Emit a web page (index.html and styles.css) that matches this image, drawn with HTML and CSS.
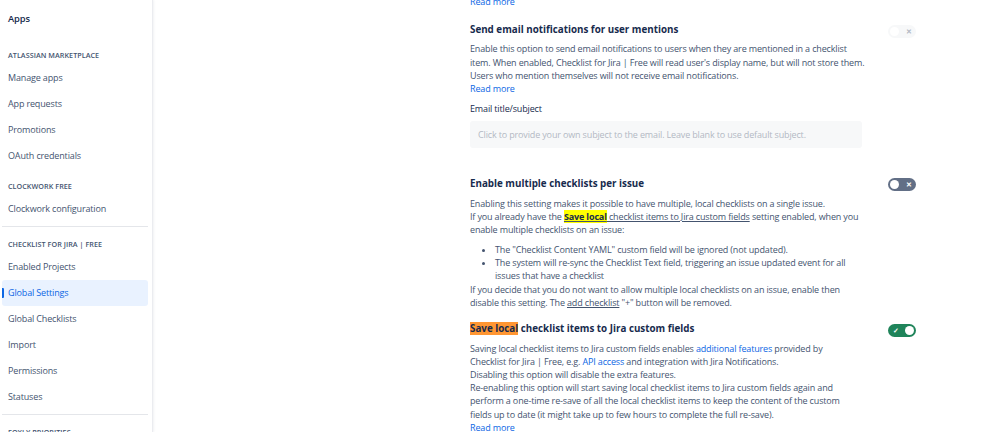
FILE: index.html
```html
<!DOCTYPE html>
<html lang="en">
<head>
<meta charset="utf-8">
<title>Global Settings</title>
<link rel="stylesheet" href="styles.css">
</head>
<body>
<div class="layout">
  <nav class="sidebar">
    <div class="nav-apps">Apps</div>
    <div class="nav-group">
      <div class="nav-head">ATLASSIAN MARKETPLACE</div>
      <div class="nav-item">Manage apps</div>
      <div class="nav-item">App requests</div>
      <div class="nav-item">Promotions</div>
      <div class="nav-item">OAuth credentials</div>
    </div>
    <div class="nav-group">
      <div class="nav-head">CLOCKWORK FREE</div>
      <div class="nav-item">Clockwork configuration</div>
    </div>
    <div class="nav-divider"></div>
    <div class="nav-group">
      <div class="nav-head">CHECKLIST FOR JIRA | FREE</div>
      <div class="nav-item">Enabled Projects</div>
      <div class="nav-item nav-item-active">Global Settings</div>
      <div class="nav-item">Global Checklists</div>
      <div class="nav-item">Import</div>
      <div class="nav-item">Permissions</div>
      <div class="nav-item">Statuses</div>
    </div>
    <div class="nav-divider"></div>
    <div class="nav-group">
      <div class="nav-head">FOXLY PRIORITIES</div>
    </div>
  </nav>

  <main class="main">
    <a class="link top-link">Read more</a>

    <section class="setting setting-first">
      <div class="setting-body">
        <h3 class="setting-title">Send email notifications for user mentions</h3>
        <p class="desc desc-fixed">Enable this option to send email notifications to users when they are mentioned in a checklist<br>item. When enabled, Checklist for Jira | Free will read user's display name, but will not store them.<br>Users who mention themselves will not receive email notifications.<br><a class="link">Read more</a></p>
        <div class="field-label">Email title/subject</div>
        <div class="field-input">Click to provide your own subject to the email. Leave blank to use default subject.</div>
      </div>
      <span class="toggle toggle-disabled"><span class="knob"></span><span class="mark">✕</span></span>
    </section>

    <section class="setting setting-second">
      <div class="setting-body">
        <h3 class="setting-title">Enable multiple checklists per issue</h3>
        <p class="desc">Enabling this setting makes it possible to have multiple, local checklists on a single issue.<br>If you already have the <u class="ref"><mark class="hl-yellow">Save local</mark> checklist items to Jira custom fields</u> setting enabled, when you enable multiple checklists on an issue:</p>
        <ul class="bullets">
          <li>The "Checklist Content YAML" custom field will be ignored (not updated).</li>
          <li>The system will re-sync the Checklist Text field, triggering an issue updated event for all issues that have a checklist</li>
        </ul>
        <p class="desc">If you decide that you do not want to allow multiple local checklists on an issue, enable then disable this setting. The <u>add checklist</u> "+" button will be removed.</p>
      </div>
      <span class="toggle toggle-off"><span class="knob"></span><span class="mark">✕</span></span>
    </section>

    <section class="setting setting-third">
      <div class="setting-body">
        <h3 class="setting-title"><mark class="hl-orange">Save local</mark> checklist items to Jira custom fields</h3>
        <p class="desc">Saving local checklist items to Jira custom fields enables <a class="link">additional features</a> provided by Checklist for Jira | Free, e.g. <a class="link">API access</a> and integration with Jira Notifications.<br>Disabling this option will disable the extra features.<br>Re-enabling this option will start saving local checklist items to Jira custom fields again and perform a one-time re-save of all the local checklist items to keep the content of the custom fields up to date (it might take up to few hours to complete the full re-save).<br><a class="link">Read more</a></p>
      </div>
      <span class="toggle toggle-on"><span class="mark">✓</span><span class="knob"></span></span>
    </section>
  </main>
</div>
</body>
</html>
```

FILE: styles.css
```css
* { box-sizing: border-box; }
html, body { margin: 0; padding: 0; }
body {
  font-family: "Open Sans", "Noto Sans", sans-serif;
  font-size: 9px;
  letter-spacing: -0.15px;
  color: #44546f;
  background: #fff;
  width: 999px;
  height: 432px;
  overflow: hidden;
}
.layout { display: flex; height: 432px; }

.sidebar {
  width: 153px;
  flex: none;
  border-right: 1px solid #ebecf0;
  box-shadow: 1px 0 2px rgba(9, 30, 66, 0.06);
  padding: 0 4px 0 2px;
}
.nav-apps {
  height: 42px;
  padding: 12px 0 0 6px;
  line-height: 14px;
  font-size: 9.4px;
  font-weight: 600;
  color: #172b4d;
}
.nav-group + .nav-group { margin-top: 4px; }
.nav-head {
  height: 23px;
  padding: 8px 0 0 6px;
  line-height: 10px;
  font-size: 7.2px;
  font-weight: 600;
  color: #44546f;
  letter-spacing: 0.05px;
}
.nav-item {
  height: 26px;
  line-height: 26px;
  padding-left: 6px;
  color: #44546f;
  border-radius: 3px;
  position: relative;
}
.nav-item-active {
  background: #e9f2ff;
  color: #0c66e4;
}
.nav-item-active::before {
  content: "";
  position: absolute;
  left: 0;
  top: 8px;
  width: 2px;
  height: 10px;
  background: #0c66e4;
  border-radius: 0 1px 1px 0;
}
.nav-divider {
  height: 1px;
  background: #e4e6ea;
  margin: 4px 0;
}

.main {
  flex: 1;
  padding-left: 317px;
  padding-top: 0;
}
.link { color: #0c66e4; text-decoration: none; }
.top-link { display: block; line-height: 13.3px; margin-top: -5px; }

.setting { display: flex; align-items: flex-start; }
.setting-body { width: 392px; flex: none; }
.setting-third .setting-body { width: 386px; }
.setting-title {
  margin: 0;
  font-size: 9.8px;
  font-weight: 700;
  line-height: 14px;
  color: #172b4d;
  letter-spacing: 0;
}
.desc { margin: 0; line-height: 13.3px; }
.desc-fixed { white-space: nowrap; }
.field-label {
  margin-top: 7px;
  line-height: 13.4px;
  color: #172b4d;
  font-weight: 500;
}
.field-input {
  margin-top: 5px;
  height: 27px;
  background: #f7f8f9;
  border-radius: 3px;
  padding: 0 8px;
  line-height: 27px;
  color: #b3b9c4;
}

.setting-first { margin-top: 15px; }
.setting-first .desc { margin-top: 5px; }
.setting-second .desc:first-of-type, .setting-third .desc { margin-top: 6px; }
.setting-second { margin-top: 29px; }
.setting-third { margin-top: 13px; }
.setting-third .desc { line-height: 13.05px; }

.bullets {
  margin: 6px 0 0;
  padding-left: 25px;
  line-height: 13.3px;
}
.setting-second .bullets + .desc { margin-top: 0; }

.ref { text-decoration: underline; color: #44546f; }
mark { color: #172b4d; }
.hl-yellow { background: #ffff00; font-weight: 700; }
.hl-orange { background: #ff9632; }

.toggle {
  flex: none;
  margin-left: 26px;
  margin-top: 1.5px;
  width: 28px;
  height: 13px;
  border-radius: 7px;
  display: flex;
  align-items: center;
  justify-content: space-between;
  padding: 0 2px;
  letter-spacing: 0;
}
.setting-third .toggle { margin-left: 32px; }
.knob {
  width: 9px;
  height: 9px;
  border-radius: 50%;
  background: #fff;
}
.mark {
  width: 11px;
  text-align: center;
  font-size: 7px;
  line-height: 9px;
  font-weight: 700;
  color: #fff;
}
.toggle-disabled { background: #f7f8f9; }
.toggle-disabled .mark { color: #b3b9c4; }
.toggle-off { background: #626f86; }
.toggle-on { background: #1f845a; }
```
